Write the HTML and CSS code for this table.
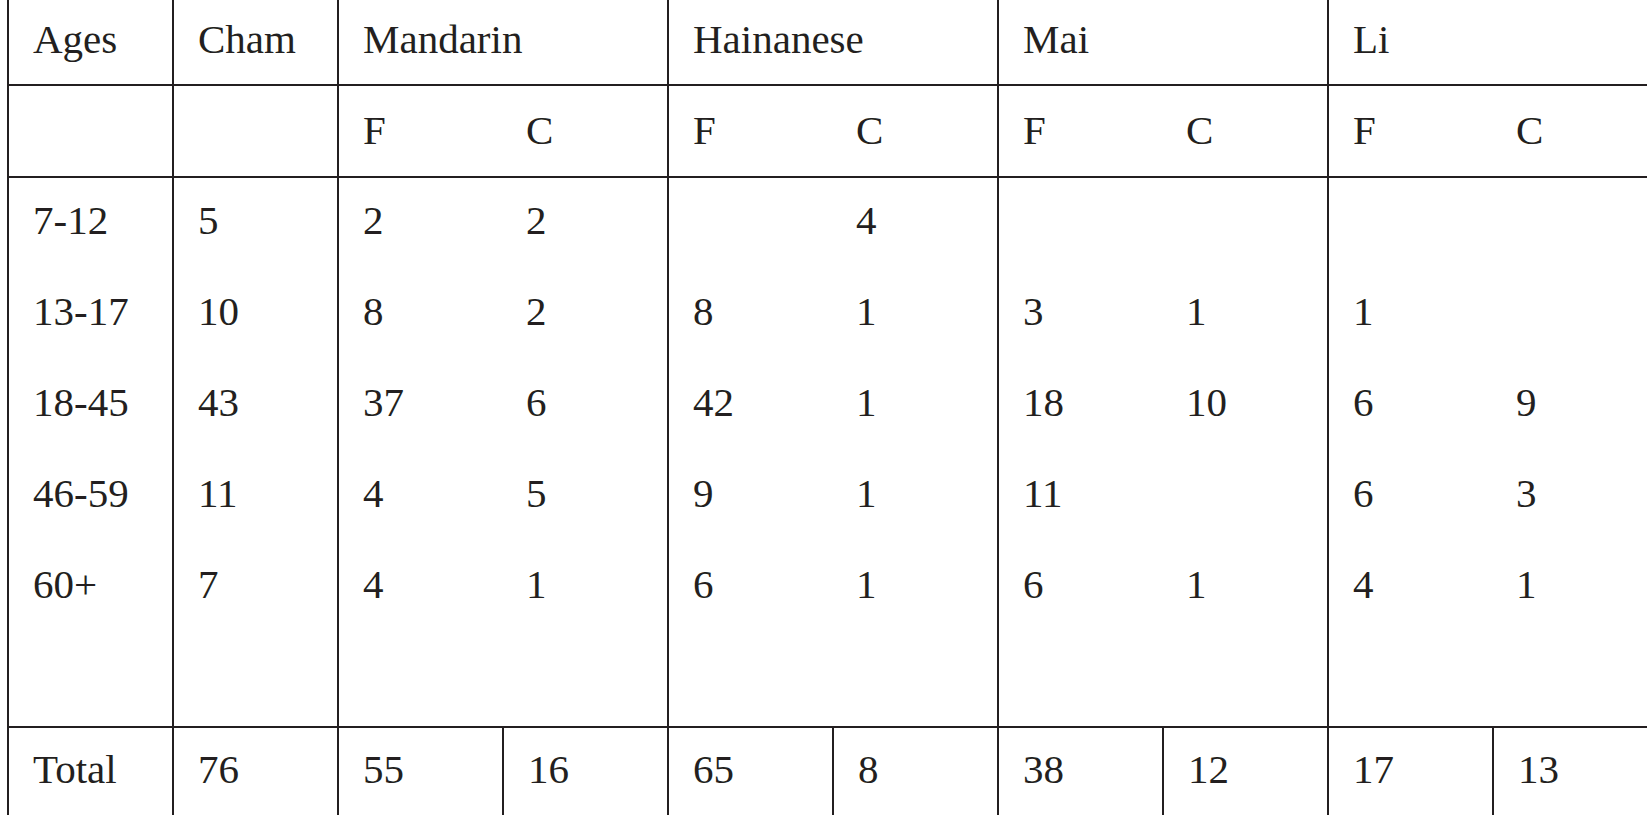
FILE: index.html
```html
<!DOCTYPE html>
<html lang="en">
<head>
<meta charset="utf-8">
<title>Language use by age</title>
<link rel="stylesheet" href="styles.css">
</head>
<body>
<div class="table" role="table">
  <!-- header -->
  <div class="c hd bt bl">Ages</div>
  <div class="c hd bt bl">Cham</div>
  <div class="c hd bt bl span2">Mandarin</div>
  <div class="c hd bt bl span2">Hainanese</div>
  <div class="c hd bt bl span2">Mai</div>
  <div class="c hd bt bl br span2">Li</div>
  <!-- sub header -->
  <div class="c sub bt bl"></div>
  <div class="c sub bt bl"></div>
  <div class="c sub bt bl">F</div>
  <div class="c sub bt">C</div>
  <div class="c sub bt bl">F</div>
  <div class="c sub bt">C</div>
  <div class="c sub bt bl">F</div>
  <div class="c sub bt">C</div>
  <div class="c sub bt bl">F</div>
  <div class="c sub bt br">C</div>
  <!-- 7-12 -->
  <div class="c bt bl">7-12</div>
  <div class="c bt bl">5</div>
  <div class="c bt bl">2</div>
  <div class="c bt">2</div>
  <div class="c bt bl"></div>
  <div class="c bt">4</div>
  <div class="c bt bl"></div>
  <div class="c bt"></div>
  <div class="c bt bl"></div>
  <div class="c bt br"></div>
  <!-- 13-17 -->
  <div class="c bl">13-17</div>
  <div class="c bl">10</div>
  <div class="c bl">8</div>
  <div class="c">2</div>
  <div class="c bl">8</div>
  <div class="c">1</div>
  <div class="c bl">3</div>
  <div class="c">1</div>
  <div class="c bl">1</div>
  <div class="c br"></div>
  <!-- 18-45 -->
  <div class="c bl">18-45</div>
  <div class="c bl">43</div>
  <div class="c bl">37</div>
  <div class="c">6</div>
  <div class="c bl">42</div>
  <div class="c">1</div>
  <div class="c bl">18</div>
  <div class="c">10</div>
  <div class="c bl">6</div>
  <div class="c br">9</div>
  <!-- 46-59 -->
  <div class="c bl">46-59</div>
  <div class="c bl">11</div>
  <div class="c bl">4</div>
  <div class="c">5</div>
  <div class="c bl">9</div>
  <div class="c">1</div>
  <div class="c bl">11</div>
  <div class="c"></div>
  <div class="c bl">6</div>
  <div class="c br">3</div>
  <!-- 60+ -->
  <div class="c bl">60+</div>
  <div class="c bl">7</div>
  <div class="c bl">4</div>
  <div class="c">1</div>
  <div class="c bl">6</div>
  <div class="c">1</div>
  <div class="c bl">6</div>
  <div class="c">1</div>
  <div class="c bl">4</div>
  <div class="c br">1</div>
  <!-- empty -->
  <div class="c bl"></div>
  <div class="c bl"></div>
  <div class="c bl"></div>
  <div class="c"></div>
  <div class="c bl"></div>
  <div class="c"></div>
  <div class="c bl"></div>
  <div class="c"></div>
  <div class="c bl"></div>
  <div class="c br"></div>
  <!-- total -->
  <div class="c tot bt bb bl">Total</div>
  <div class="c tot bt bb bl">76</div>
  <div class="c tot bt bb bl">55</div>
  <div class="c tot bt bb bl">16</div>
  <div class="c tot bt bb bl">65</div>
  <div class="c tot bt bb bl">8</div>
  <div class="c tot bt bb bl">38</div>
  <div class="c tot bt bb bl">12</div>
  <div class="c tot bt bb bl">17</div>
  <div class="c tot bt bb bl br">13</div>
</div>
</body>
</html>
```
FILE: styles.css
```css
html, body {
  margin: 0;
  padding: 0;
  background: #ffffff;
  overflow: hidden;
}

body {
  font-family: "Liberation Serif", "Times New Roman", serif;
  font-size: 41px;
  color: #231f20;
}

.table {
  display: grid;
  grid-template-columns: repeat(10, 165px);
  grid-template-rows: 92px 92px 93px 91px 91px 91px 91px 93px 94px;
  margin: -8px 0 0 7px;
  width: max-content;
}

.c {
  box-sizing: border-box;
  padding: 22px 0 0 24px;
  line-height: 41px;
  white-space: nowrap;
}

.hd { padding-top: 25px; }
.sub { padding-top: 24px; }
.tot { padding-top: 21px; }

.span2 { grid-column: span 2; }

.bt { border-top: 2px solid #231f20; }
.bb { border-bottom: 2px solid #231f20; }
.bl { border-left: 2px solid #231f20; }
.br { border-right: 2px solid #231f20; }
```
